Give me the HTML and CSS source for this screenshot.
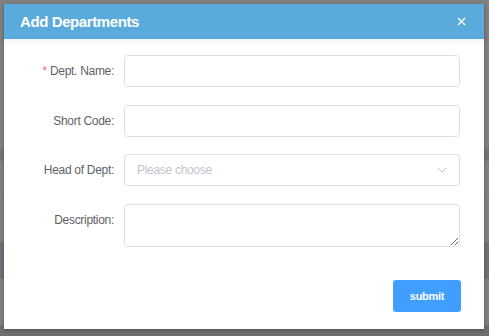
FILE: index.html
```html
<!DOCTYPE html>
<html lang="en">
<head>
    <meta charset="UTF-8">
    <meta name="viewport" content="width=device-width, initial-scale=1.0">
    <title>Add Departments</title>
    <link rel="stylesheet" href="styles.css">
</head>
<body>
    <div class="page">
        <div class="row" style="height: 57px"></div>
        <div class="row" style="height: 92px"></div>
        <div class="row band"></div>
        <div class="row" style="height: 31px"></div>
        <div class="row line"></div>
        <div class="row" style="height: 49px"></div>
        <div class="row band-blue"></div>
        <div class="row" style="height: 46px"></div>
        <div class="row foot"></div>
    </div>

    <div class="overlay">
        <div class="dialog">
            <div class="dialog-header">
                <span class="dialog-title">Add Departments</span>
                <svg class="dialog-close" width="9" height="9" viewBox="0 0 9 9">
                    <path d="M1 1 L8 8 M8 1 L1 8" stroke="#fff" stroke-width="1.4"/>
                </svg>
            </div>
            <form class="dialog-body" onsubmit="return false">
                <label class="form-label"><span class="required">*</span> Dept. Name:</label>
                <input type="text" class="form-input">

                <label class="form-label">Short Code:</label>
                <input type="text" class="form-input">

                <label class="form-label">Head of Dept:</label>
                <div class="form-select">
                    <span class="placeholder">Please choose</span>
                    <svg class="arrow" width="10" height="6" viewBox="0 0 10 6">
                        <path d="M1 1 L5 5 L9 1" fill="none" stroke="#c0c4cc" stroke-width="1"/>
                    </svg>
                </div>

                <label class="form-label">Description:</label>
                <textarea class="form-textarea"></textarea>

                <div class="form-actions">
                    <button type="submit" class="btn-primary">submit</button>
                </div>
            </form>
        </div>
    </div>
</body>
</html>
```

FILE: styles.css
```css
html, body {
    margin: 0;
    height: 100%;
    overflow: hidden;
}
body {
    font-family: "Liberation Sans", Arial, sans-serif;
    background: #fff;
    position: relative;
}
.page .row { background: #fff; }
.page .band { height: 12px; background: #e6e6e6; }
.page .line { height: 1px; background: #f2f2f2; }
.page .band-blue { height: 37px; background: #d8e0ea; }
.page .foot { height: 20px; background: #dcdcdc; }

.overlay {
    position: absolute;
    inset: 0;
    background: rgba(0, 0, 0, 0.5);
    padding: 4px;
}
.dialog {
    width: 480px;
    height: 325px;
    background: #fff;
    display: flex;
    flex-direction: column;
    box-shadow: 0 1px 3px rgba(0, 0, 0, 0.3);
}
.dialog-header {
    height: 35px;
    background: #5aabdb;
    display: flex;
    align-items: center;
    justify-content: space-between;
    padding: 0 18px 0 16px;
    box-shadow: 0 2px 6px rgba(0, 0, 0, 0.08);
    position: relative;
}
.dialog-title {
    color: #fff;
    font-weight: bold;
    font-size: 15px;
    letter-spacing: -0.4px;
}
.dialog-body {
    display: grid;
    grid-template-columns: 110px 1fr;
    column-gap: 10px;
    row-gap: 17.7px;
    padding: 16px 24px 0 0;
    margin: 0;
}
.form-label {
    font-size: 12px;
    letter-spacing: -0.3px;
    color: #606266;
    text-align: right;
    line-height: 32px;
    white-space: nowrap;
}
.required { color: #f56c6c; }
.form-input, .form-select, .form-textarea {
    box-sizing: border-box;
    border: 1px solid #dcdfe6;
    border-radius: 4px;
    background: #fff;
    font-family: inherit;
    font-size: 12px;
    margin: 0;
}
.form-input { height: 32px; }
.form-select {
    height: 32px;
    display: flex;
    align-items: center;
    justify-content: space-between;
    padding: 0 12px 0 12px;
}
.placeholder {
    color: #c0c4cc;
    letter-spacing: -0.3px;
}
.form-textarea {
    height: 43px;
    resize: vertical;
}
.form-actions {
    grid-column: 1 / -1;
    display: flex;
    justify-content: flex-end;
    margin-top: 15px;
    margin-right: -1px;
}
.btn-primary {
    width: 68px;
    height: 32px;
    background: #409eff;
    border: none;
    border-radius: 3px;
    color: #fff;
    font-family: inherit;
    font-weight: bold;
    font-size: 11px;
    letter-spacing: -0.3px;
    cursor: pointer;
}
```
